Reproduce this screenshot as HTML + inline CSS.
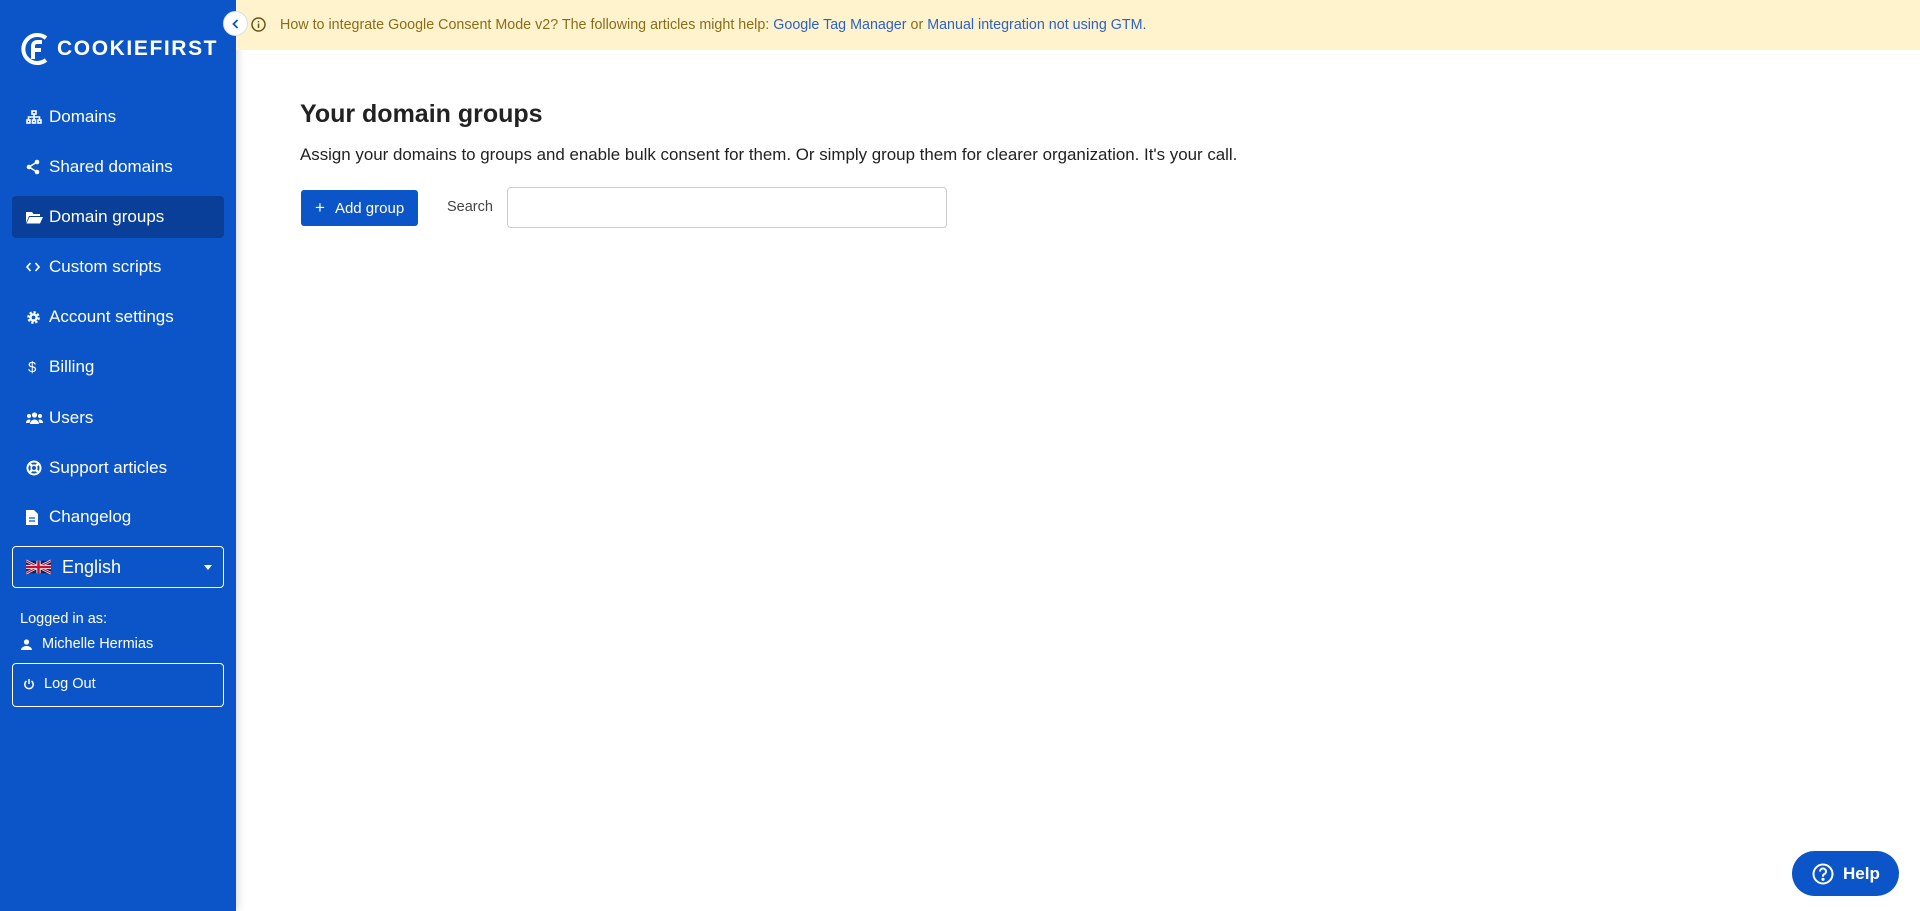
<!DOCTYPE html>
<html><head><meta charset="utf-8"><style>
*{box-sizing:border-box;margin:0;padding:0}
body{width:1920px;height:911px;overflow:hidden;background:#fff;font-family:"Liberation Sans",sans-serif;position:relative}
.side{position:absolute;left:0;top:0;width:236px;height:911px;background:#0c55c8;color:#fff;box-shadow:2px 0 8px rgba(0,0,0,.15)}
.logo{position:absolute;left:20px;top:31px;display:flex;align-items:center}
.logo span{font-size:21px;font-weight:bold;letter-spacing:1.6px;margin-left:3px}
.nav{position:absolute;left:12px;width:212px;height:42px;display:flex;align-items:center;font-size:17px}
.nav.act{background:#0a3f99;border-radius:4px}
.nav svg{position:absolute;left:14px}
.nav b{font-weight:normal;position:absolute;left:37px}
.box{position:absolute;left:12px;width:212px;border:1px solid #fff;border-radius:4px}
.banner{position:absolute;left:236px;top:0;width:1684px;height:50px;background:#fff3cd;color:#8a6d1b;font-size:14.3px;display:flex;align-items:center;padding-left:44px}
.banner a{color:#2d62c5;text-decoration:none}
h1{position:absolute;left:300px;top:100px;font-size:25px;color:#222}
p.sub{position:absolute;left:300px;top:145px;font-size:16.9px;color:#222}
.btn{position:absolute;left:301px;top:190px;width:117px;height:36px;background:#0c55c8;border-radius:3px;color:#fff;font-size:15px;display:flex;align-items:center;padding-left:14px}
.help{position:absolute;left:1792px;top:851px;width:107px;height:45px;border-radius:23px;background:#0c55c8;color:#fff;font-weight:bold;font-size:17px;display:flex;align-items:center;padding-left:20px}
</style></head><body>
<div class="side">
 <div class="logo">
  <svg width="34" height="36" viewBox="0 0 34 36"><path d="M26 7A14 14 0 1 0 26 29" fill="none" stroke="#fff" stroke-width="4"/><path d="M13 28V15a4 4 0 0 1 4-4h5M13 19h8" fill="none" stroke="#fff" stroke-width="4"/></svg>
  <span>COOKIEFIRST</span>
 </div>
 <div class="nav" style="top:96px"><svg width="16" height="14" viewBox="0 0 16 14" fill="none" stroke="#fff" stroke-width="1.6"><rect x="6" y="1" width="4" height="3"/><rect x="1" y="10" width="3" height="3"/><rect x="6.5" y="10" width="3" height="3"/><rect x="12" y="10" width="3" height="3"/><path d="M8 4v6M2.5 10V7h11v3"/></svg><b>Domains</b></div>
 <div class="nav" style="top:146px"><svg width="14" height="16" viewBox="0 0 14 16" fill="#fff"><circle cx="11" cy="3" r="2.3"/><circle cx="3" cy="8" r="2.3"/><circle cx="11" cy="13" r="2.3"/><path d="M11 3L3 8l8 5" stroke="#fff" stroke-width="1.6" fill="none"/></svg><b>Shared domains</b></div>
 <div class="nav act" style="top:196px"><svg width="17" height="13" viewBox="0 0 17 13" fill="#fff"><path d="M0 1h6l1.5 2H14v2H3L0 12z"/><path d="M3.5 6H17l-3 6.5H0.5z"/></svg><b>Domain groups</b></div>
 <div class="nav" style="top:246px"><svg width="14" height="10" viewBox="0 0 14 10" fill="none" stroke="#fff" stroke-width="1.7"><path d="M4.5 1L1 5l3.5 4M9.5 1L13 5l-3.5 4"/></svg><b>Custom scripts</b></div>
 <div class="nav" style="top:296px"><svg width="15" height="15" viewBox="0 0 16 16"><circle cx="8" cy="8" r="5" fill="none" stroke="#fff" stroke-width="3.5" stroke-dasharray="2.2 1.7"/><circle cx="8" cy="8" r="4.5" fill="#fff"/><circle cx="8" cy="8" r="2" fill="#0c55c8"/></svg><b>Account settings</b></div>
 <div class="nav" style="top:346px"><span style="position:absolute;left:16px;font-size:15px">$</span><b>Billing</b></div>
 <div class="nav" style="top:397px"><svg width="17" height="12" viewBox="0 0 17 12" fill="#fff"><circle cx="8.5" cy="3" r="2.6"/><circle cx="3" cy="4" r="2"/><circle cx="14" cy="4" r="2"/><path d="M4 12a4.5 4.5 0 0 1 9 0z"/><path d="M0 11a3 3 0 0 1 4.5-3L3.5 11zM17 11a3 3 0 0 0-4.5-3l1 3z"/></svg><b>Users</b></div>
 <div class="nav" style="top:447px"><svg width="16" height="16" viewBox="0 0 16 16" fill="none" stroke="#fff"><circle cx="8" cy="8" r="6.5" stroke-width="2"/><circle cx="8" cy="8" r="2.8" stroke-width="1.6"/><path d="M3.5 3.5l2.5 2.5M12.5 3.5L10 6M3.5 12.5L6 10M12.5 12.5L10 10" stroke-width="2.4"/></svg><b>Support articles</b></div>
 <div class="nav" style="top:496px"><svg width="12" height="15" viewBox="0 0 12 15" fill="#fff"><path d="M0 0h8l4 4v11H0z"/><path d="M3 8h6M3 11h6" stroke="#0c55c8" stroke-width="1.3"/></svg><b>Changelog</b></div>
 <div class="box" style="top:546px;height:42px">
  <svg style="position:absolute;left:13px;top:12px" width="25" height="16" viewBox="0 0 60 30"><rect width="60" height="30" fill="#012169"/><path d="M0 0L60 30M60 0L0 30" stroke="#fff" stroke-width="6"/><path d="M0 0L60 30M60 0L0 30" stroke="#C8102E" stroke-width="3"/><path d="M30 0v30M0 15h60" stroke="#fff" stroke-width="10"/><path d="M30 0v30M0 15h60" stroke="#C8102E" stroke-width="6"/></svg>
  <span style="position:absolute;left:49px;top:10px;font-size:18px">English</span>
  <span style="position:absolute;left:191px;top:18px;border:4px solid transparent;border-top:5px solid #fff;border-bottom:0"></span>
 </div>
 <div style="position:absolute;left:20px;top:611px;font-size:14.5px">Logged in as:</div>
 <svg style="position:absolute;left:21px;top:639px" width="11" height="11" viewBox="0 0 11 11" fill="#fff"><circle cx="5.5" cy="3" r="2.6"/><path d="M0 11a5.5 4 0 0 1 11 0z"/></svg>
 <div style="position:absolute;left:42px;top:636px;font-size:14.5px">Michelle Hermias</div>
 <div class="box" style="top:663px;height:44px">
  <svg style="position:absolute;left:10px;top:14px" width="12" height="12" viewBox="0 0 12 12" fill="none" stroke="#fff" stroke-width="1.5"><path d="M3.5 3a4.2 4.2 0 1 0 5 0M6 1v5"/></svg>
  <span style="position:absolute;left:31px;top:12px;font-size:14.5px">Log Out</span>
 </div>
</div>
<div style="position:absolute;left:223px;top:11px;width:25px;height:25px;border-radius:50%;background:#fff;border:1px solid #ddd;z-index:3"><svg style="position:absolute;left:8px;top:7px" width="7" height="10" viewBox="0 0 7 10" fill="none" stroke="#0c55c8" stroke-width="1.8"><path d="M5.5 1L1.5 5l4 4"/></svg></div>
<div class="banner"><svg style="position:absolute;left:15px;top:17px" width="15" height="15" viewBox="0 0 15 15" fill="none" stroke="#6b5410" stroke-width="1.5"><circle cx="7.5" cy="7.5" r="6.5"/><path d="M7.5 6.5v4.5M7.5 4v1.2"/></svg>How to integrate Google Consent Mode v2? The following articles might help:&nbsp;<a>Google Tag Manager</a>&nbsp;or&nbsp;<a>Manual integration not using GTM.</a></div>
<h1>Your domain groups</h1>
<p class="sub">Assign your domains to groups and enable bulk consent for them. Or simply group them for clearer organization. It's your call.</p>
<div class="btn"><span style="font-size:17px;margin-right:10px">+</span>Add group</div>
<div style="position:absolute;left:447px;top:199px;font-size:14.5px;color:#444">Search</div>
<div style="position:absolute;left:507px;top:187px;width:440px;height:41px;border:1px solid #ccc;border-radius:4px"></div>
<div class="help"><svg width="22" height="22" viewBox="0 0 22 22" fill="none" stroke="#fff" stroke-width="2"><circle cx="11" cy="11" r="9.5"/><path d="M8 8.5a3 3 0 1 1 4 2.8c-.8.4-1 1-1 1.8v.5"/><circle cx="11" cy="16.3" r=".6" fill="#fff"/></svg><span style="margin-left:9px">Help</span></div>
</body></html>
